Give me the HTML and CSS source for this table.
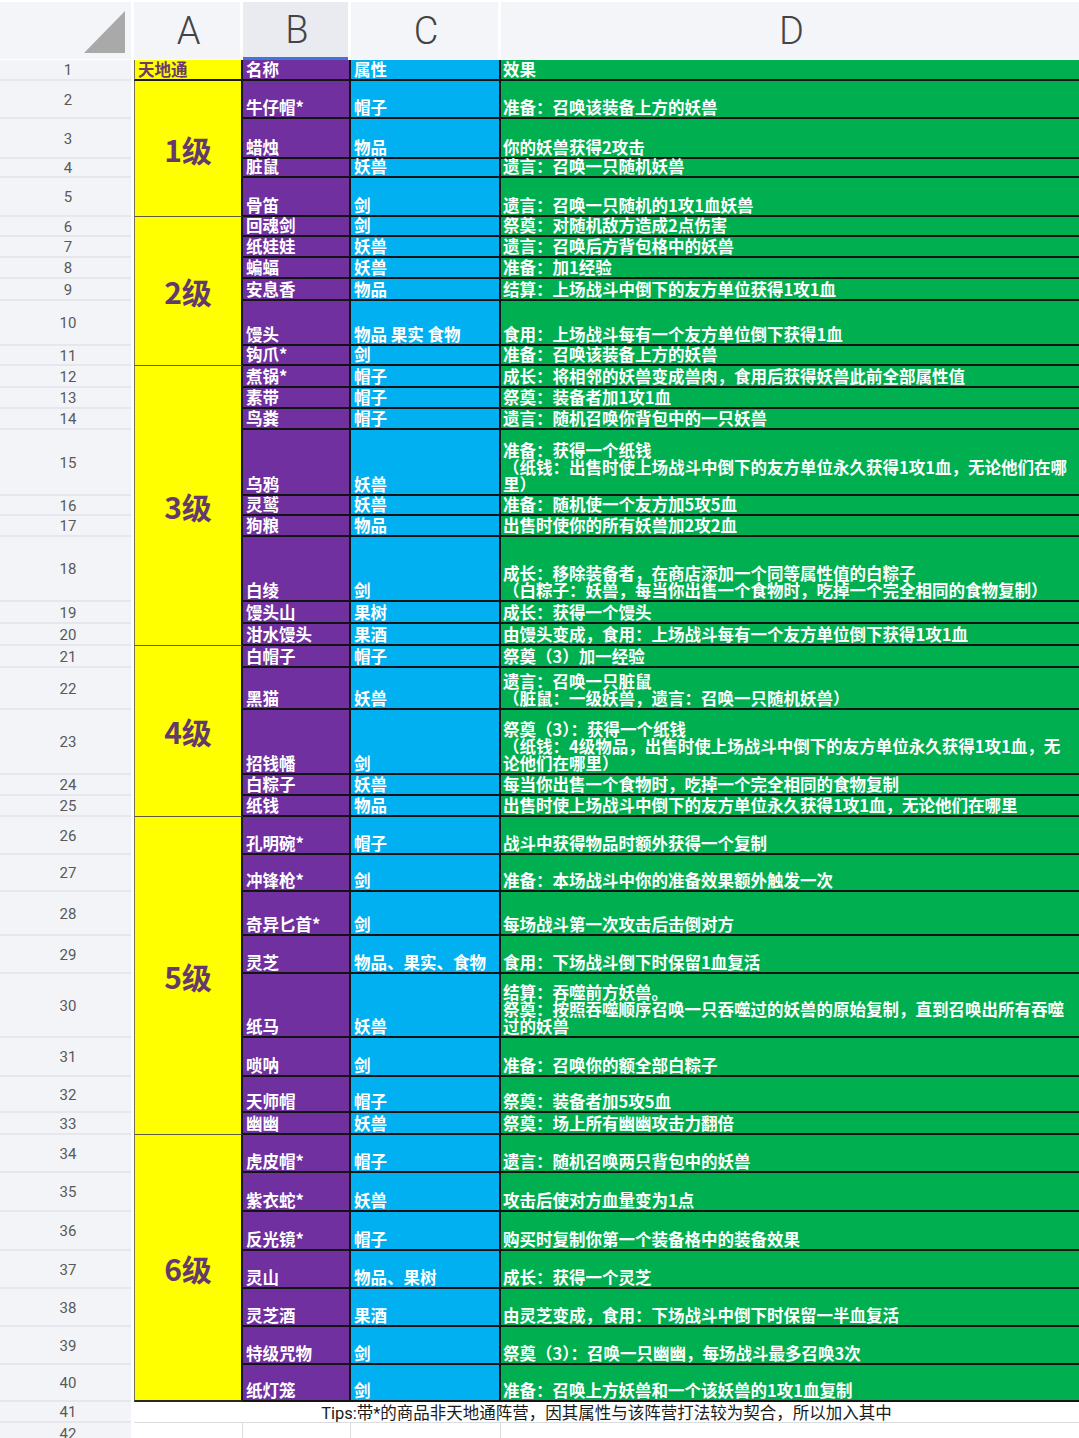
FILE: index.html
```html
<!DOCTYPE html>
<html lang="zh-CN">
<head>
<meta charset="utf-8">
<title>天地通</title>
<link rel="stylesheet" href="styles.css">
</head>
<body>
<div class="sheet">
  <div class="hdr corner"><span class="tri"></span></div>
  <div class="hdr col">A</div>
  <div class="hdr col sel">B</div>
  <div class="hdr col">C</div>
  <div class="hdr col last">D</div>

  <div class="rn">1</div><div class="a head">天地通</div><div class="b">名称</div><div class="c">属性</div><div class="d">效果</div>

  <div class="rn">2</div><div class="a lvl span4">1级</div><div class="b">牛仔帽*</div><div class="c">帽子</div><div class="d">准备：召唤该装备上方的妖兽</div>
  <div class="rn">3</div><div class="b">蜡烛</div><div class="c">物品</div><div class="d">你的妖兽获得2攻击</div>
  <div class="rn">4</div><div class="b">脏鼠</div><div class="c">妖兽</div><div class="d">遗言：召唤一只随机妖兽</div>
  <div class="rn">5</div><div class="b">骨笛</div><div class="c">剑</div><div class="d">遗言：召唤一只随机的1攻1血妖兽</div>

  <div class="rn">6</div><div class="a lvl span6">2级</div><div class="b">回魂剑</div><div class="c">剑</div><div class="d">祭奠：对随机敌方造成2点伤害</div>
  <div class="rn">7</div><div class="b">纸娃娃</div><div class="c">妖兽</div><div class="d">遗言：召唤后方背包格中的妖兽</div>
  <div class="rn">8</div><div class="b">蝙蝠</div><div class="c">妖兽</div><div class="d">准备：加1经验</div>
  <div class="rn">9</div><div class="b">安息香</div><div class="c">物品</div><div class="d">结算：上场战斗中倒下的友方单位获得1攻1血</div>
  <div class="rn">10</div><div class="b">馒头</div><div class="c">物品 果实 食物</div><div class="d">食用：上场战斗每有一个友方单位倒下获得1血</div>
  <div class="rn">11</div><div class="b">钩爪*</div><div class="c">剑</div><div class="d">准备：召唤该装备上方的妖兽</div>

  <div class="rn">12</div><div class="a lvl span9">3级</div><div class="b">煮锅*</div><div class="c">帽子</div><div class="d">成长：将相邻的妖兽变成兽肉，食用后获得妖兽此前全部属性值</div>
  <div class="rn">13</div><div class="b">素带</div><div class="c">帽子</div><div class="d">祭奠：装备者加1攻1血</div>
  <div class="rn">14</div><div class="b">鸟粪</div><div class="c">帽子</div><div class="d">遗言：随机召唤你背包中的一只妖兽</div>
  <div class="rn">15</div><div class="b">乌鸦</div><div class="c">妖兽</div><div class="d"><span>准备：获得一个纸钱<br>（纸钱：出售时使上场战斗中倒下的友方单位永久获得1攻1血，无论他们在哪<br>里）</span></div>
  <div class="rn">16</div><div class="b">灵鹫</div><div class="c">妖兽</div><div class="d">准备：随机使一个友方加5攻5血</div>
  <div class="rn">17</div><div class="b">狗粮</div><div class="c">物品</div><div class="d">出售时使你的所有妖兽加2攻2血</div>
  <div class="rn">18</div><div class="b">白绫</div><div class="c">剑</div><div class="d"><span>成长：移除装备者，在商店添加一个同等属性值的白粽子<br>（白粽子：妖兽，每当你出售一个食物时，吃掉一个完全相同的食物复制）</span></div>
  <div class="rn">19</div><div class="b">馒头山</div><div class="c">果树</div><div class="d">成长：获得一个馒头</div>
  <div class="rn">20</div><div class="b">泔水馒头</div><div class="c">果酒</div><div class="d">由馒头变成，食用：上场战斗每有一个友方单位倒下获得1攻1血</div>

  <div class="rn">21</div><div class="a lvl span5">4级</div><div class="b">白帽子</div><div class="c">帽子</div><div class="d">祭奠（3）加一经验</div>
  <div class="rn">22</div><div class="b">黑猫</div><div class="c">妖兽</div><div class="d"><span>遗言：召唤一只脏鼠<br>（脏鼠：一级妖兽，遗言：召唤一只随机妖兽）</span></div>
  <div class="rn">23</div><div class="b">招钱幡</div><div class="c">剑</div><div class="d"><span>祭奠（3）：获得一个纸钱<br>（纸钱：4级物品，出售时使上场战斗中倒下的友方单位永久获得1攻1血，无<br>论他们在哪里）</span></div>
  <div class="rn">24</div><div class="b">白粽子</div><div class="c">妖兽</div><div class="d">每当你出售一个食物时，吃掉一个完全相同的食物复制</div>
  <div class="rn">25</div><div class="b">纸钱</div><div class="c">物品</div><div class="d">出售时使上场战斗中倒下的友方单位永久获得1攻1血，无论他们在哪里</div>

  <div class="rn">26</div><div class="a lvl span8">5级</div><div class="b">孔明碗*</div><div class="c">帽子</div><div class="d">战斗中获得物品时额外获得一个复制</div>
  <div class="rn">27</div><div class="b">冲锋枪*</div><div class="c">剑</div><div class="d">准备：本场战斗中你的准备效果额外触发一次</div>
  <div class="rn">28</div><div class="b">奇异匕首*</div><div class="c">剑</div><div class="d">每场战斗第一次攻击后击倒对方</div>
  <div class="rn">29</div><div class="b">灵芝</div><div class="c">物品、果实、食物</div><div class="d">食用：下场战斗倒下时保留1血复活</div>
  <div class="rn">30</div><div class="b">纸马</div><div class="c">妖兽</div><div class="d"><span>结算：吞噬前方妖兽。<br>祭奠：按照吞噬顺序召唤一只吞噬过的妖兽的原始复制，直到召唤出所有吞噬<br>过的妖兽</span></div>
  <div class="rn">31</div><div class="b">唢呐</div><div class="c">剑</div><div class="d">准备：召唤你的额全部白粽子</div>
  <div class="rn">32</div><div class="b">天师帽</div><div class="c">帽子</div><div class="d">祭奠：装备者加5攻5血</div>
  <div class="rn">33</div><div class="b">幽幽</div><div class="c">妖兽</div><div class="d">祭奠：场上所有幽幽攻击力翻倍</div>

  <div class="rn">34</div><div class="a lvl span7 lastlvl">6级</div><div class="b">虎皮帽*</div><div class="c">帽子</div><div class="d">遗言：随机召唤两只背包中的妖兽</div>
  <div class="rn">35</div><div class="b">紫衣蛇*</div><div class="c">妖兽</div><div class="d">攻击后使对方血量变为1点</div>
  <div class="rn">36</div><div class="b">反光镜*</div><div class="c">帽子</div><div class="d">购买时复制你第一个装备格中的装备效果</div>
  <div class="rn">37</div><div class="b">灵山</div><div class="c">物品、果树</div><div class="d">成长：获得一个灵芝</div>
  <div class="rn">38</div><div class="b">灵芝酒</div><div class="c">果酒</div><div class="d">由灵芝变成，食用：下场战斗中倒下时保留一半血复活</div>
  <div class="rn">39</div><div class="b">特级咒物</div><div class="c">剑</div><div class="d">祭奠（3）：召唤一只幽幽，每场战斗最多召唤3次</div>
  <div class="rn">40</div><div class="b">纸灯笼</div><div class="c">剑</div><div class="d">准备：召唤上方妖兽和一个该妖兽的1攻1血复制</div>

  <div class="rn">41</div><div class="tips">Tips:带*的商品非天地通阵营，因其属性与该阵营打法较为契合，所以加入其中</div>

  <div class="rn">42</div><div class="blank a-col"></div><div class="blank b-col"></div><div class="blank c-col"></div><div class="blank d-col"></div>
</div>
</body>
</html>
```

FILE: styles.css
```css
* { box-sizing: border-box; }

html, body {
  margin: 0;
  padding: 0;
  background: #ffffff;
  width: 1079px;
  height: 1438px;
  overflow: hidden;
}

.sheet {
  display: grid;
  grid-template-columns: 134px 109px 108px 150px 578px;
  grid-template-rows:
    60px
    21px 38px 40px 19px 39px
    20px 21px 21px 22px 45px 20px
    22px 21px 21px 66px 20px 21px 65px 22px 22px
    22px 42px 65px 21px 21px
    38px 37px 44px 38px 64px 39px 36px 22px
    38px 39px 39px 38px 38px 38px 37px
    21px 22px;
  font-family: "Noto Sans CJK SC", "Noto Sans", sans-serif;
}

/* column header row */
.hdr {
  grid-row: 1;
  background: #f4f5f9;
  margin: 2px 3px 1px 0;
  display: flex;
  align-items: center;
  justify-content: center;
  font-family: Roboto, "Liberation Sans", sans-serif;
  font-weight: 300;
  font-size: 38px;
  color: #444444;
  position: relative;
}
.hdr.col { padding-left: 3px; }
.hdr.last { margin-right: 0; }
.hdr.sel {
  background: #e9ebf1;
  border-bottom: 3px solid #3c78d8;
  margin-bottom: 0;
}
.corner { grid-column: 1; }
.corner .tri {
  position: absolute;
  right: 6px;
  bottom: 6px;
  width: 0;
  height: 0;
  border-left: 41px solid transparent;
  border-bottom: 42px solid #a9a9a9;
}

/* row numbers */
.rn {
  grid-column: 1;
  background: #f3f4f8;
  margin-right: 3px;
  padding-left: 5px;
  padding-top: 1px;
  border-bottom: 2px solid #e6e7ec;
  display: flex;
  align-items: center;
  justify-content: center;
  font-family: Roboto, "Liberation Sans", sans-serif;
  font-size: 15px;
  color: #595959;
}

/* data cells */
.a, .b, .c, .d {
  font-weight: 700;
  font-size: 16.5px;
  line-height: 17px;
  white-space: nowrap;
}

.a {
  grid-column: 2;
  background: #ffff00;
  color: #6b3a6e;
  border-left: 1px solid #77734f;
  border-right: 2px solid #1a1a1a;
  border-bottom: 1px solid #5d5a45;
}
.a.head {
  display: flex;
  align-items: flex-end;
  padding: 0 3px 1px;
  border-bottom: 2px solid #1a1a1a;
}
.lvl {
  display: flex;
  align-items: center;
  justify-content: center;
  font-size: 30px;
  line-height: 34px;
  color: #643a6c;
}
.span4 { grid-row: span 4; }
.span5 { grid-row: span 5; }
.span6 { grid-row: span 6; }
.span7 { grid-row: span 7; }
.span8 { grid-row: span 8; }
.span9 { grid-row: span 9; }
.lastlvl { border-bottom: 2px solid #2a2a1a; }

.b, .c, .d {
  display: flex;
  align-items: flex-end;
  padding: 0 3px 1px;
  color: #ffffff;
  border-right: 2px solid #141414;
  border-bottom: 2px solid #141414;
}
.b { grid-column: 3; background: #7030a0; }
.c { grid-column: 4; background: #00b0f0; }
.d { grid-column: 5; background: #00b050; border-right: 0; padding-left: 2px; }

/* tips row */
.tips {
  grid-column: 2 / 6;
  background: #ffffff;
  border-bottom: 1px solid #dcdde1;
  display: flex;
  align-items: center;
  justify-content: center;
  font-family: Roboto, "Noto Sans CJK SC", sans-serif;
  font-size: 16.5px;
  color: #1a1a1a;
  white-space: nowrap;
}

.blank {
  background: #ffffff;
  border-right: 1px solid #dcdde1;
}
.a-col { grid-column: 2; }
.b-col { grid-column: 3; }
.c-col { grid-column: 4; }
.d-col { grid-column: 5; border-right: 0; }
```
